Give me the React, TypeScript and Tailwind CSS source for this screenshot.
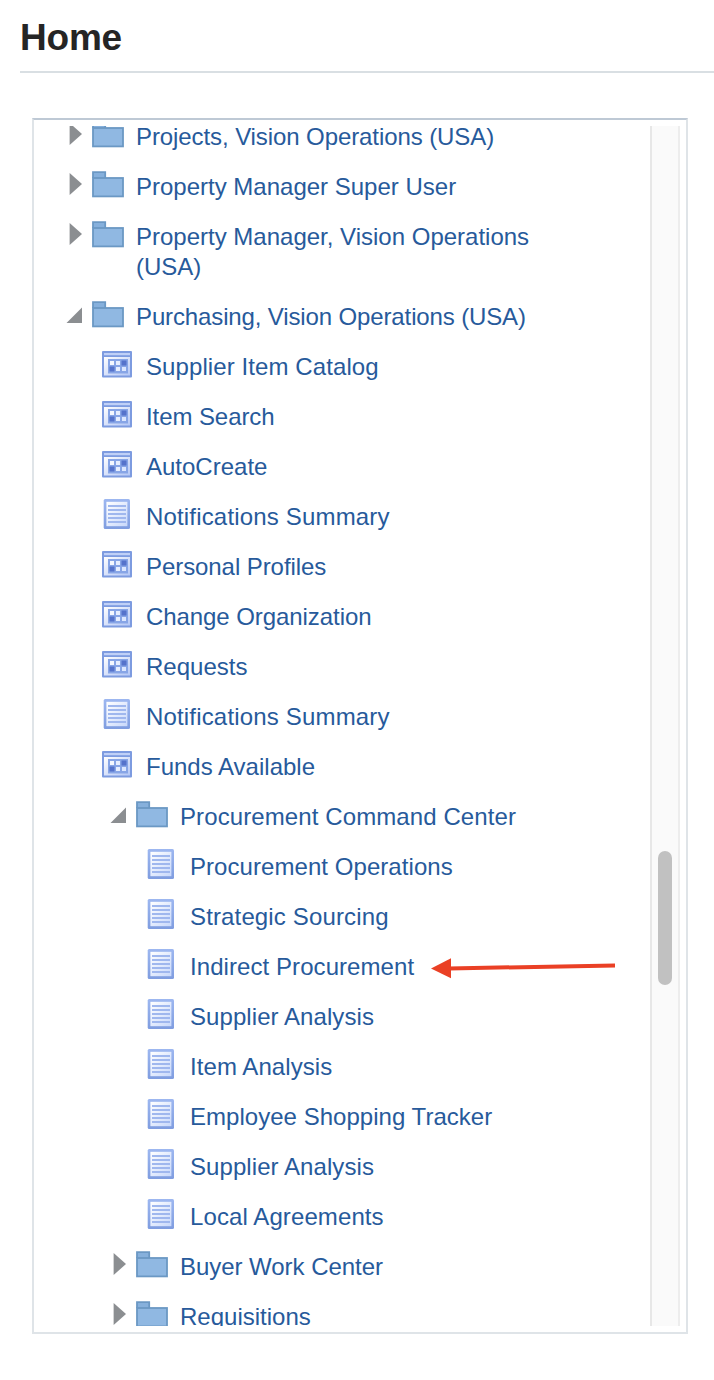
type Kind = 'folder' | 'window' | 'page';

interface Item {
  label: string;
  kind: Kind;
  level: 0 | 1 | 2;
  open?: boolean;
  marked?: boolean;
  tracking?: string;
}

const items: Item[] = [
  { label: 'Projects, Vision Operations (USA)', kind: 'folder', level: 0, tracking: 'tracking-[-0.09px]' },
  { label: 'Property Manager Super User', kind: 'folder', level: 0 },
  { label: 'Property Manager, Vision Operations (USA)', kind: 'folder', level: 0 },
  { label: 'Purchasing, Vision Operations (USA)', kind: 'folder', level: 0, open: true, tracking: 'tracking-[-0.13px]' },
  { label: 'Supplier Item Catalog', kind: 'window', level: 1, tracking: 'tracking-[0.09px]' },
  { label: 'Item Search', kind: 'window', level: 1, tracking: 'tracking-[-0.08px]' },
  { label: 'AutoCreate', kind: 'window', level: 1 },
  { label: 'Notifications Summary', kind: 'page', level: 1, tracking: 'tracking-[0.17px]' },
  { label: 'Personal Profiles', kind: 'window', level: 1, tracking: 'tracking-[-0.07px]' },
  { label: 'Change Organization', kind: 'window', level: 1, tracking: 'tracking-[-0.07px]' },
  { label: 'Requests', kind: 'window', level: 1 },
  { label: 'Notifications Summary', kind: 'page', level: 1, tracking: 'tracking-[0.17px]' },
  { label: 'Funds Available', kind: 'window', level: 1 },
  { label: 'Procurement Command Center', kind: 'folder', level: 1, open: true, tracking: 'tracking-[0.1px]' },
  { label: 'Procurement Operations', kind: 'page', level: 2, tracking: 'tracking-[0.06px]' },
  { label: 'Strategic Sourcing', kind: 'page', level: 2, tracking: 'tracking-[0.14px]' },
  { label: 'Indirect Procurement', kind: 'page', level: 2, marked: true, tracking: 'tracking-[0.07px]' },
  { label: 'Supplier Analysis', kind: 'page', level: 2, tracking: 'tracking-[0.07px]' },
  { label: 'Item Analysis', kind: 'page', level: 2, tracking: 'tracking-[0.07px]' },
  { label: 'Employee Shopping Tracker', kind: 'page', level: 2, tracking: 'tracking-[0.03px]' },
  { label: 'Supplier Analysis', kind: 'page', level: 2, tracking: 'tracking-[0.07px]' },
  { label: 'Local Agreements', kind: 'page', level: 2, tracking: 'tracking-[0.1px]' },
  { label: 'Buyer Work Center', kind: 'folder', level: 1, tracking: 'tracking-[-0.04px]' },
  { label: 'Requisitions', kind: 'folder', level: 1 },
];

function Toggle({ open }: { open?: boolean }) {
  return (
    <svg width="18" height="34" viewBox="0 0 18 34" className="block shrink-0">
      {open ? (
        <path d="M16 15.5V31H.5Z" fill="#8b8e91" />
      ) : (
        <path d="M3.6 11 16 22 3.6 33Z" fill="#8b8e91" />
      )}
    </svg>
  );
}

function FolderIcon() {
  return (
    <svg width="32" height="27" viewBox="0 0 32 27" className="mt-[9px] block shrink-0">
      <path d="M1 7V1.2h12.2V7" fill="#86b0dc" stroke="#6b98c4" strokeWidth="1.8" />
      <rect x="1" y="7" width="30" height="18.4" fill="#90b8e2" stroke="#6b98c4" strokeWidth="1.8" />
    </svg>
  );
}

function WindowIcon() {
  return (
    <svg width="30" height="27" viewBox="0 0 30 27" className="mt-[9px] block shrink-0">
      <defs>
        <linearGradient id="win" x1="0" y1="0" x2="1" y2="1">
          <stop offset="0" stopColor="#ffffff" />
          <stop offset="1" stopColor="#b3c6f5" />
        </linearGradient>
      </defs>
      <rect x="0" y="0" width="30" height="26.5" rx="1" fill="#7d9be0" />
      <rect x="2" y="2" width="26" height="2.2" fill="#bfd0f7" />
      <rect x="2" y="6" width="26" height="18.5" fill="url(#win)" />
      <rect x="6" y="8" width="20" height="14.5" fill="#87a5e6" />
      <rect x="8" y="10" width="4" height="4" fill="#f4f8ff" />
      <rect x="14" y="10" width="4" height="4" fill="#e6eeff" />
      <rect x="19.5" y="9.5" width="5" height="5" fill="#5573cb" />
      <rect x="7.5" y="15.5" width="5" height="5" fill="#5573cb" />
      <rect x="14" y="16" width="4" height="4" fill="#e6eeff" />
      <rect x="20" y="16" width="4" height="4" fill="#dce7ff" />
    </svg>
  );
}

function PageIcon() {
  return (
    <svg width="28" height="31" viewBox="0 0 28 31" className="mt-[7px] block shrink-0">
      <defs>
        <linearGradient id="edge" x1="0" y1="0" x2="0" y2="1">
          <stop offset="0" stopColor="#9db7f0" />
          <stop offset="1" stopColor="#7f9de0" />
        </linearGradient>
        <linearGradient id="sheet" x1="0" y1="0" x2="1" y2="1">
          <stop offset="0" stopColor="#ffffff" />
          <stop offset="1" stopColor="#c8d8fb" />
        </linearGradient>
      </defs>
      <rect x="1.7" y="0" width="26.3" height="30" rx="1.5" fill="url(#edge)" />
      <rect x="4.4" y="2.8" width="21" height="24.4" fill="url(#sheet)" />
      <path
        d="M6 7h18M6 11h18M6 15h18M6 19h18M6 23h18"
        stroke="#9fb7ee"
        strokeWidth="2.2"
      />
    </svg>
  );
}

const folderIndent = { 0: 'pl-[32px]', 1: 'pl-[76px]', 2: 'pl-[120px]' };
const leafIndent = { 0: 'pl-[24px]', 1: 'pl-[68px]', 2: 'pl-[112px]' };

function Row({ item }: { item: Item }) {
  const isFolder = item.kind === 'folder';
  return (
    <li className={`flex items-start ${isFolder ? folderIndent[item.level] : leafIndent[item.level]}`}>
      {isFolder ? (
        <>
          <Toggle open={item.open} />
          <div className="ml-2 mr-3">
            <FolderIcon />
          </div>
        </>
      ) : (
        <div className="flex w-11 shrink-0">
          {item.kind === 'window' ? <WindowIcon /> : <PageIcon />}
        </div>
      )}
      <a className={`max-w-[420px] py-[10px] text-2xl leading-[30px] ${item.tracking ?? ''}`}>{item.label}</a>
      {item.marked && (
        <svg width="186" height="24" viewBox="0 0 186 24" className="ml-[17px] mt-[14px] block shrink-0">
          <path d="M18 12.4 184 9.6" stroke="#ea4025" strokeWidth="4" />
          <path d="M0 12.5 20 2.3v20Z" fill="#ea4025" />
        </svg>
      )}
    </li>
  );
}

export default function App() {
  return (
    <main className="h-[1380px] w-[714px] overflow-hidden bg-white font-['Liberation_Sans',Arial,sans-serif]">
      <header className="ml-5 h-[73px] border-b-2 border-[#d9dfe3] pt-[15px]">
        <h1 className="text-[37px] font-bold leading-[46px] tracking-[-0.2px] text-[#252525]">Home</h1>
      </header>
      <section className="ml-8 mt-[45px] h-[1216px] w-[656px] border-2 border-[#dfe4e8] border-t-[#bec9d5] py-1.5">
        <div className="flex h-[1200px] overflow-hidden">
          <ul className="-mt-[14px] w-[616px] shrink-0 text-[#275a9b]">
            {items.map((item, i) => (
              <Row key={i} item={item} />
            ))}
          </ul>
          <div className="h-full w-[30px] shrink-0 border-x-2 border-l-[#e7e7e7] border-r-[#ededed] bg-[#fafafa] pl-1.5 pt-[725px]">
            <div className="h-[134px] w-[14px] rounded-full bg-[#c1c1c1]" />
          </div>
        </div>
      </section>
    </main>
  );
}
